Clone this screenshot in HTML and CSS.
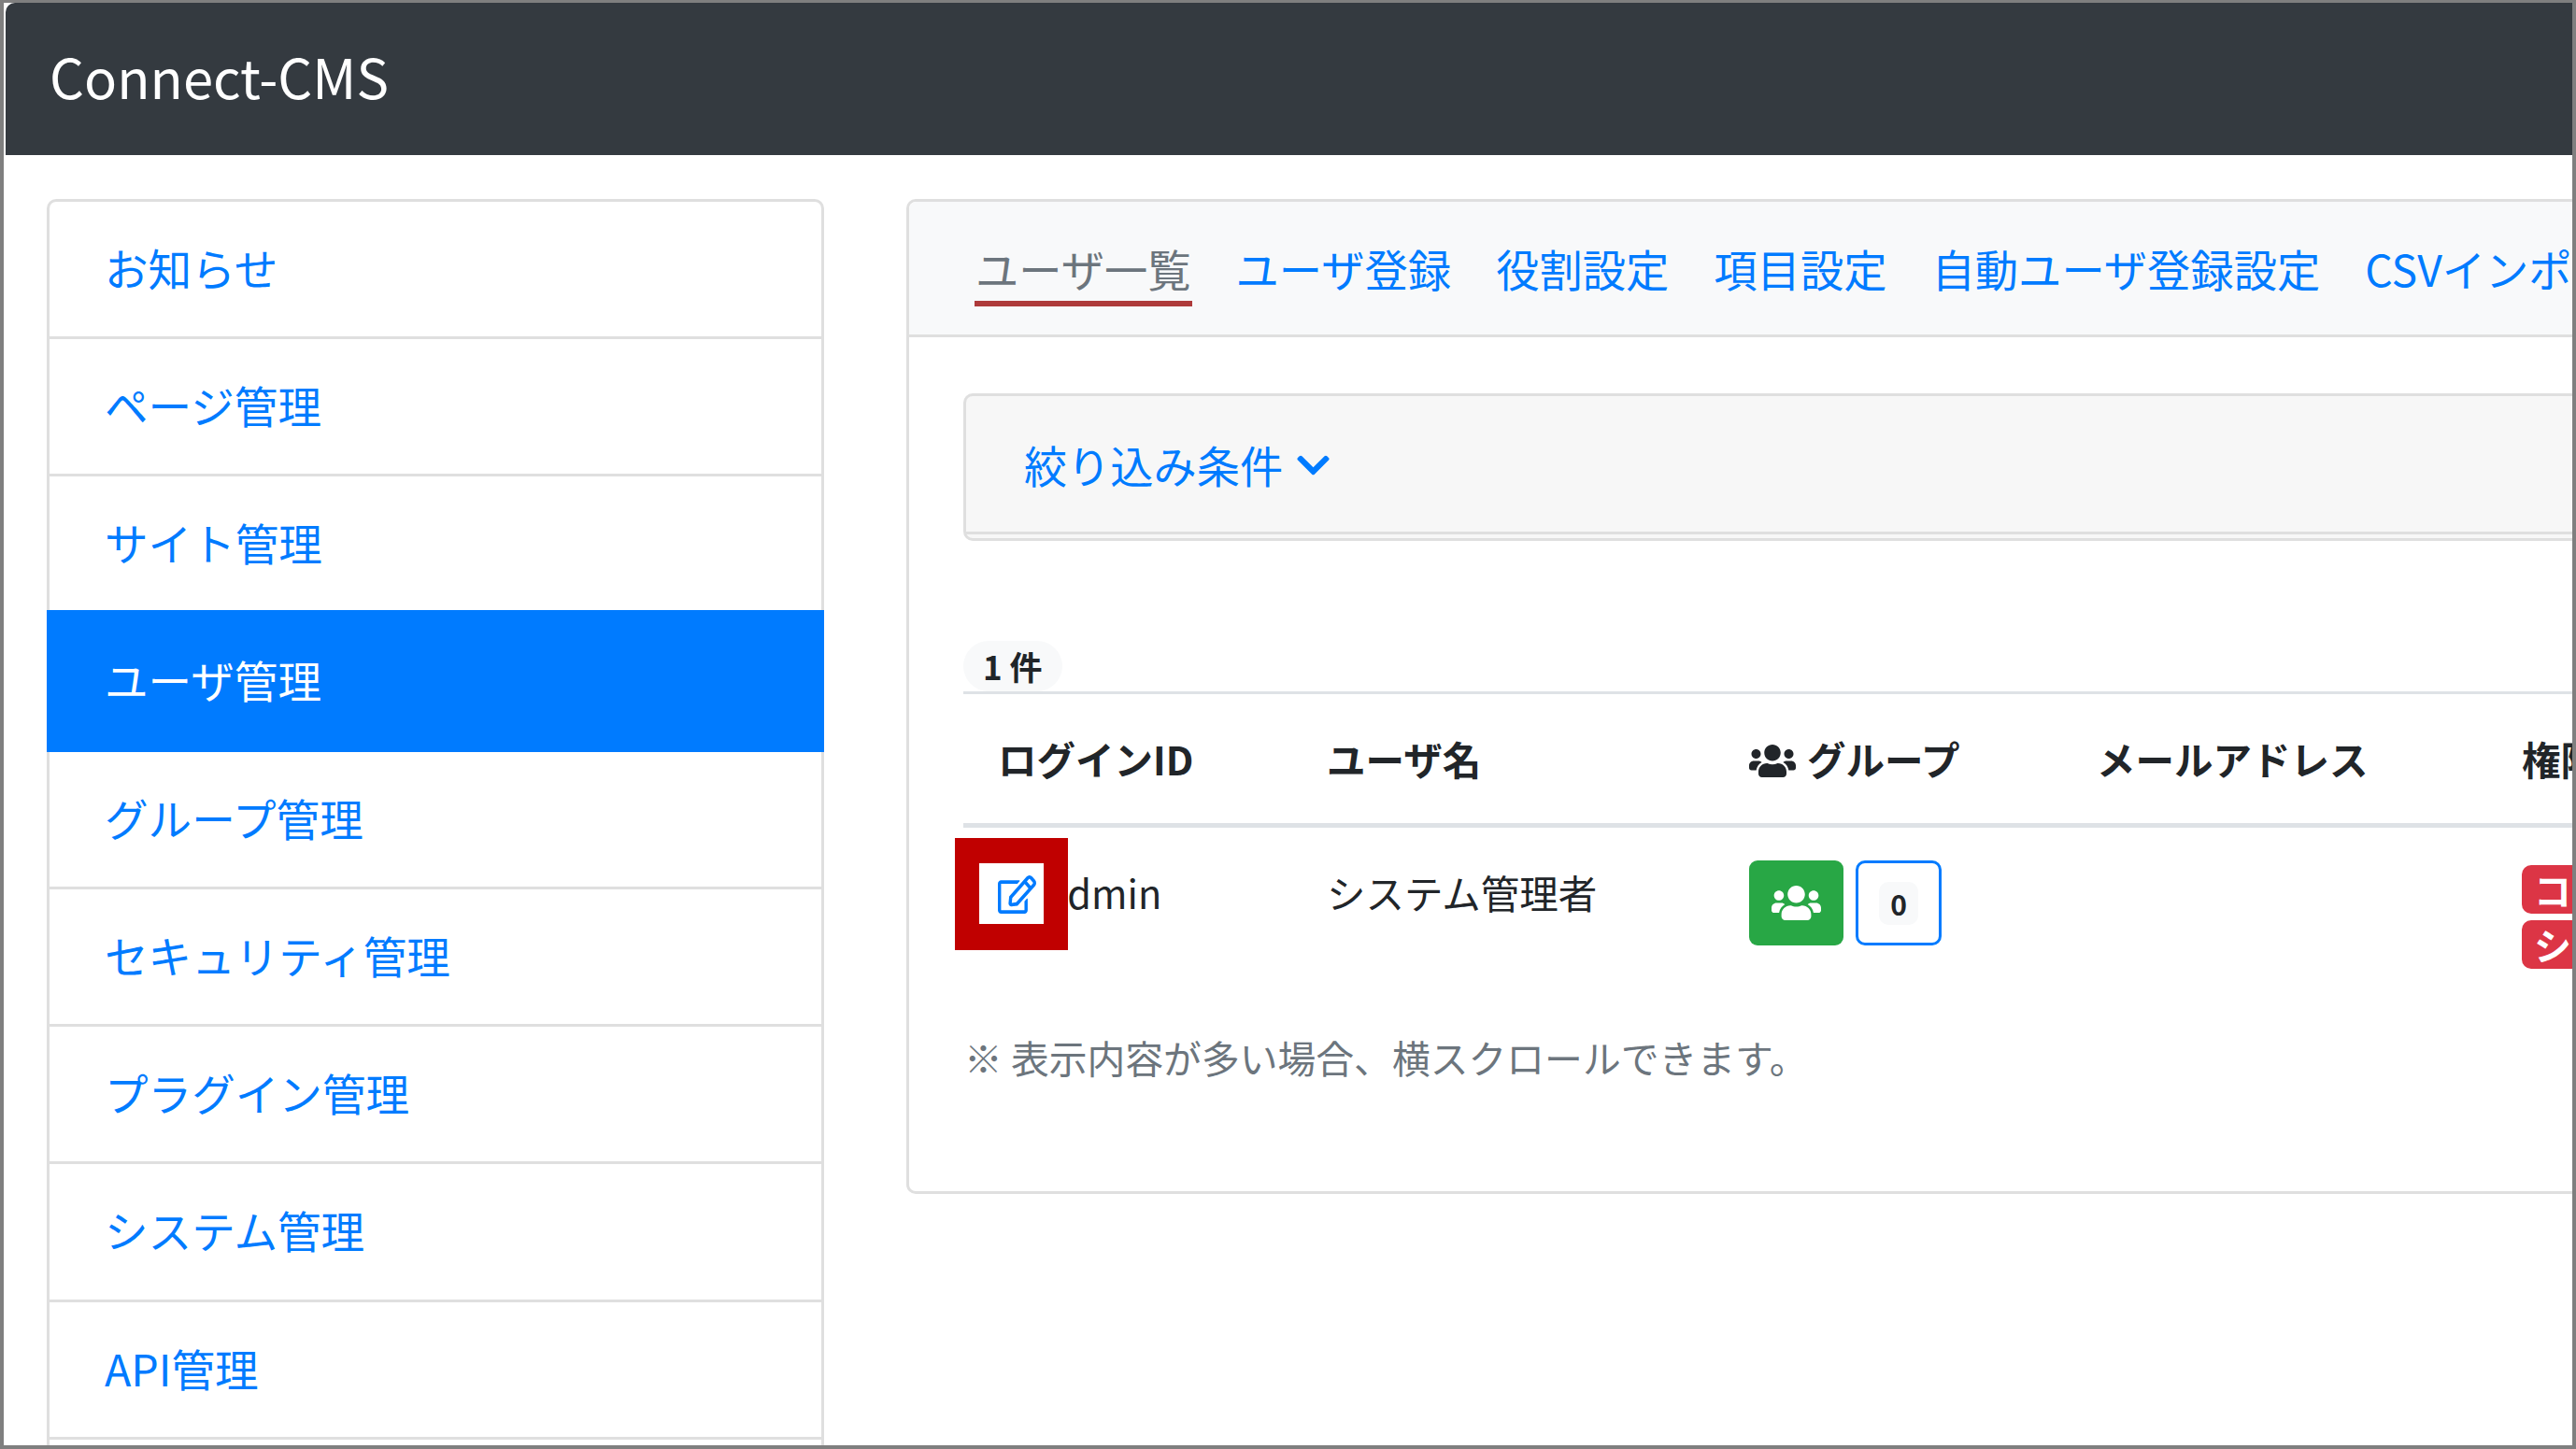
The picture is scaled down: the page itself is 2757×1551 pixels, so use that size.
FILE: index.html
```html
<!DOCTYPE html>
<html lang="ja">
<head>
<meta charset="utf-8">
<title>Connect-CMS</title>
<link rel="stylesheet" href="styles.css">
</head>
<body>
<div class="frame">
  <header class="navbar"><a class="brand">Connect-CMS</a></header>
  <div class="content">
    <nav class="sidebar">
      <a class="item">お知らせ</a>
      <a class="item">ページ管理</a>
      <a class="item">サイト管理</a>
      <a class="item active">ユーザ管理</a>
      <a class="item">グループ管理</a>
      <a class="item">セキュリティ管理</a>
      <a class="item">プラグイン管理</a>
      <a class="item">システム管理</a>
      <a class="item">API管理</a>
      <a class="item">ログ管理</a>
    </nav>
    <main class="card">
      <div class="tabs">
        <a class="tab current">ユーザ一覧</a>
        <a class="tab">ユーザ登録</a>
        <a class="tab">役割設定</a>
        <a class="tab">項目設定</a>
        <a class="tab">自動ユーザ登録設定</a>
        <a class="tab">CSVインポート</a>
      </div>
      <div class="card-body">
        <div class="filter">
          <div class="filter-head">
            <a class="filter-link">絞り込み条件
              <svg class="chevron" viewBox="0 0 448 512"><path fill="currentColor" d="M207.029 381.476L12.686 187.132c-9.373-9.373-9.373-24.569 0-33.941l22.667-22.667c9.357-9.357 24.522-9.375 33.901-.04L224 284.505l154.745-154.021c9.379-9.335 24.544-9.317 33.901.04l22.667 22.667c9.373 9.373 9.373 24.569 0 33.941L240.971 381.476c-9.373 9.372-24.569 9.372-33.942 0z"/></svg>
            </a>
          </div>
        </div>
        <div class="count"><span class="count-pill">1 件</span></div>
        <table class="users">
          <thead>
            <tr>
              <th class="c-id">ログインID</th>
              <th class="c-name">ユーザ名</th>
              <th class="c-group">
                <svg class="th-icon" viewBox="0 0 640 512"><path fill="currentColor" d="M96 224c35.3 0 64-28.7 64-64s-28.7-64-64-64-64 28.7-64 64 28.7 64 64 64zm448 0c35.3 0 64-28.7 64-64s-28.7-64-64-64-64 28.7-64 64 28.7 64 64 64zm32 32h-64c-17.6 0-33.5 7.1-45.1 18.6 40.3 22.1 68.9 62 75.1 109.4h66c17.7 0 32-14.3 32-32v-32c0-35.3-28.7-64-64-64zm-256 0c61.9 0 112-50.1 112-112S381.9 32 320 32 208 82.1 208 144s50.1 112 112 112zm76.8 32h-8.3c-20.8 10-43.9 16-68.5 16s-47.6-6-68.5-16h-8.3C179.6 288 128 339.6 128 403.2V432c0 26.5 21.5 48 48 48h288c26.5 0 48-21.5 48-48v-28.8c0-63.6-51.6-115.2-115.2-115.2zm-223.7-13.4C161.5 263.1 145.6 256 128 256H64c-35.3 0-64 28.7-64 64v32c0 17.7 14.3 32 32 32h65.9c6.3-47.4 34.9-87.3 75.2-109.4z"/></svg>グループ
              </th>
              <th class="c-mail">メールアドレス</th>
              <th class="c-role">権限</th>
            </tr>
          </thead>
          <tbody>
            <tr>
              <td class="cell-id">
                <svg class="edit-icon" viewBox="0 0 576 512" preserveAspectRatio="none"><path fill="currentColor" d="M402.3 344.9l32-32c5-5 13.7-1.5 13.7 5.7V464c0 26.5-21.5 48-48 48H48c-26.5 0-48-21.5-48-48V112c0-26.5 21.5-48 48-48h273.5c7.1 0 10.7 8.6 5.7 13.7l-32 32c-1.5 1.5-3.5 2.3-5.7 2.3H48v352h352V350.5c0-2.1.8-4.1 2.3-5.6zm156.6-201.8L296.3 405.7l-90.4 10c-26.2 2.9-48.5-19.2-45.6-45.6l10-90.4L432.9 17.1c22.9-22.9 59.9-22.9 82.7 0l43.2 43.2c22.9 22.9 22.9 60 .1 82.8zM460.1 174L402 115.9 216.2 301.8l-7.3 65.3 65.3-7.3L460.1 174zm64.8-79.7l-43.2-43.2c-4.1-4.1-10.8-4.1-14.8 0L436 82l58.1 58.1 30.9-30.9c4-4.2 4-10.8-.1-14.9z"/></svg><span class="login">admin</span>
                <span class="callout"></span>
              </td>
              <td>システム管理者</td>
              <td>
                <div class="group-cell">
                  <span class="btn-green"><svg class="btn-icon" viewBox="0 0 640 512"><path fill="currentColor" d="M96 224c35.3 0 64-28.7 64-64s-28.7-64-64-64-64 28.7-64 64 28.7 64 64 64zm448 0c35.3 0 64-28.7 64-64s-28.7-64-64-64-64 28.7-64 64 28.7 64 64 64zm32 32h-64c-17.6 0-33.5 7.1-45.1 18.6 40.3 22.1 68.9 62 75.1 109.4h66c17.7 0 32-14.3 32-32v-32c0-35.3-28.7-64-64-64zm-256 0c61.9 0 112-50.1 112-112S381.9 32 320 32 208 82.1 208 144s50.1 112 112 112zm76.8 32h-8.3c-20.8 10-43.9 16-68.5 16s-47.6-6-68.5-16h-8.3C179.6 288 128 339.6 128 403.2V432c0 26.5 21.5 48 48 48h288c26.5 0 48-21.5 48-48v-28.8c0-63.6-51.6-115.2-115.2-115.2zm-223.7-13.4C161.5 263.1 145.6 256 128 256H64c-35.3 0-64 28.7-64 64v32c0 17.7 14.3 32 32 32h65.9c6.3-47.4 34.9-87.3 75.2-109.4z"/></svg></span>
                  <span class="btn-outline"><span class="zero">0</span></span>
                </div>
              </td>
              <td></td>
              <td>
                <div class="roles">
                  <span class="role">コンテンツ管理者</span>
                  <span class="role">システム管理者</span>
                </div>
              </td>
            </tr>
          </tbody>
        </table>
        <p class="note">※ 表示内容が多い場合、横スクロールできます。</p>
      </div>
    </main>
  </div>
</div>
</body>
</html>
```
FILE: styles.css
```css
* { box-sizing: border-box; }
html, body { margin: 0; padding: 0; background: #fff; }
body {
  width: 2757px;
  height: 1551px;
  overflow: hidden;
  font-family: "Noto Sans CJK JP", "Noto Sans", sans-serif;
  color: #212529;
}
.frame {
  width: 2757px;
  height: 1551px;
  border: solid #7f7f7f;
  border-width: 3px 4px 4px 4px;
  overflow: hidden;
  background: #fff;
}
.navbar {
  height: 163px;
  margin-left: 2px;
  background: #343a40;
  border-top-left-radius: 10px;
  display: flex;
  align-items: center;
  padding: 0 0 7px 47px;
}
.brand { color: #fff; font-size: 58px; line-height: 1; }
.content {
  display: flex;
  align-items: flex-start;
  padding: 47px 0 0 46px;
}
.sidebar {
  flex: 0 0 832px;
  display: flex;
  flex-direction: column;
  border: solid #dfdfdf;
  border-width: 3px 3px 0 3px;
  border-radius: 10px 10px 0 0;
}
.item {
  height: 147.2px;
  flex: 0 0 147.2px;
  display: flex;
  align-items: center;
  padding: 0 0 5px 59px;
  font-size: 46.6px;
  color: #007bff;
  border-bottom: 3px solid #dfdfdf;
}
.item.active {
  background: #007bff;
  color: #fff;
  margin: -5px -3px 0;
  padding-left: 62px;
  height: 152.2px;
  flex-basis: 152.2px;
  border-bottom: 0;
}
.card {
  flex: 0 0 1900px;
  margin-left: 88px;
  height: 1065px;
  border: 3px solid #dfdfdf;
  border-radius: 10px;
}
.tabs {
  height: 145px;
  display: flex;
  align-items: center;
  gap: 48px;
  padding: 0 0 0 71px;
  background: #f8f9fa;
  border-bottom: 3px solid #dfdfdf;
  border-radius: 8px 8px 0 0;
  white-space: nowrap;
}
.tab {
  font-size: 46.3px;
  line-height: 64px;
  color: #007bff;
  position: relative;
  top: 0;
}
.tab.current { color: #6c757d; }
.tab.current::after {
  content: "";
  position: absolute;
  left: -1px;
  right: -1px;
  bottom: -9px;
  height: 6px;
  background: #ae3a3a;
}
.card-body { padding: 60px 0 0 58px; }
.filter {
  height: 158px;
  background: #f7f7f7;
  border: 3px solid #dfdfdf;
  border-radius: 10px;
  padding-bottom: 4px;
}
.filter-head {
  height: 100%;
  border-bottom: 3px solid #dfdfdf;
  padding-left: 62px;
  display: flex;
  align-items: center;
}
.filter-link {
  color: #007bff;
  font-size: 46.2px;
  display: flex;
  align-items: center;
  gap: 15px;
}
.chevron { width: 35px; height: 40px; margin-top: 2px; }
.count { margin-top: 107px; height: 54px; }
.count-pill {
  display: inline-block;
  height: 54px;
  line-height: 54px;
  padding: 0 21px;
  background: #f8f9fa;
  border-radius: 27px;
  font-size: 35px;
  font-weight: 700;
}
.users {
  table-layout: fixed;
  width: 2000px;
  border-collapse: collapse;
  border-top: 3px solid #dee2e6;
  font-size: 41.5px;
}
.users th {
  height: 142px;
  padding: 0 0 0 37px;
  text-align: left;
  font-weight: 700;
  border-bottom: 5px solid #dee2e6;
  white-space: nowrap;
}
.users td {
  height: 165px;
  padding: 39px 0 0 37px;
  vertical-align: top;
  white-space: nowrap;
}
.c-id { width: 352px; }
.c-name { width: 452px; }
.c-group { width: 372px; }
.c-mail { width: 455px; }
.th-icon { width: 50px; height: 41px; margin-right: 12px; vertical-align: -5px; }
.cell-id { position: relative; }
.edit-icon { width: 41px; height: 41px; color: #007bff; vertical-align: -5px; }
.login { margin-left: 10px; }
.callout {
  position: absolute;
  left: -9px;
  top: 11px;
  width: 121px;
  height: 120px;
  border: solid #c00000;
  border-width: 27px 26px 28px 26px;
}
.group-cell { display: flex; gap: 13px; margin-top: -4px; }
.btn-green {
  width: 101px;
  height: 91px;
  background: #28a745;
  border-radius: 9px;
  color: #fff;
  display: flex;
  align-items: center;
  justify-content: center;
}
.btn-icon { width: 53px; height: 43px; }
.btn-outline {
  width: 92px;
  height: 91px;
  border: 3px solid #007bff;
  border-radius: 10px;
  display: flex;
  align-items: center;
  justify-content: center;
}
.zero {
  width: 42px;
  height: 46px;
  line-height: 46px;
  background: #f8f9fa;
  border-radius: 10px;
  text-align: center;
  font-size: 30px;
  font-weight: 700;
}
.roles { display: flex; flex-direction: column; align-items: flex-start; gap: 7px; margin-top: 1px; }
.role {
  height: 52px;
  line-height: 52px;
  padding: 0 13px;
  background: #dc3545;
  color: #fff;
  border-radius: 10px;
  font-size: 40px;
  font-weight: 700;
}
.note {
  margin: 55px 0 0 1px;
  font-size: 40.8px;
  line-height: 56px;
  color: #6c757d;
}
```
